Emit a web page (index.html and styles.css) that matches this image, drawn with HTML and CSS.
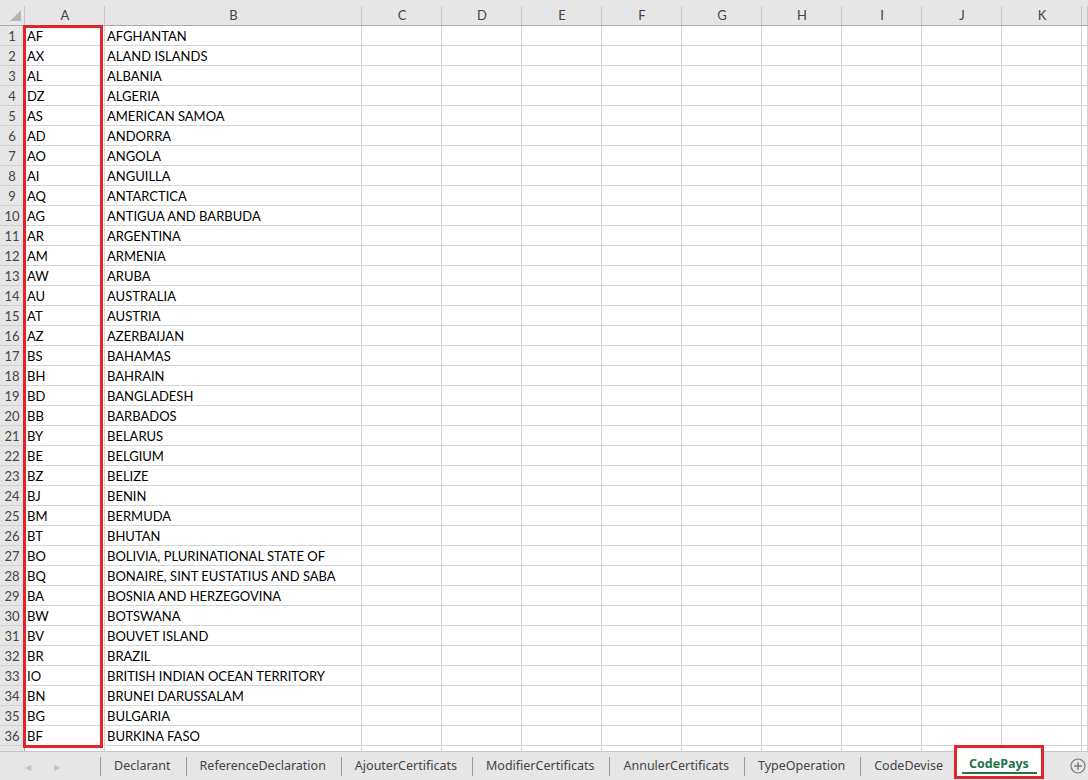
FILE: index.html
```html
<!DOCTYPE html>
<html lang="fr">
  <head>
    <meta charset="UTF-8" />
    <meta name="viewport" content="width=device-width, initial-scale=1.0" />
    <title>CodePays</title>
    <link rel="stylesheet" href="styles.css">
  </head>
  <body>
    <div class="book">
      <div class="sheet-wrap">
        <div class="sheet"></div>
        <div class="mark-col"></div>
      </div>

      <div class="tabbar">
        <div class="nav">
          <span class="arrow">&#9664;</span>
          <span class="arrow">&#9654;</span>
        </div>
        <div class="tabs">
          <span class="tab">Declarant</span>
          <span class="tab">ReferenceDeclaration</span>
          <span class="tab">AjouterCertificats</span>
          <span class="tab">ModifierCertificats</span>
          <span class="tab">AnnulerCertificats</span>
          <span class="tab">TypeOperation</span>
          <span class="tab">CodeDevise</span>
          <span class="tab active">CodePays</span>
        </div>
        <div class="add">
          <svg width="16" height="16" viewBox="0 0 16 16">
            <circle cx="8" cy="8" r="7" fill="none" stroke="#7a7a7a" stroke-width="1.2" />
            <path d="M8 4.2v7.6M4.2 8h7.6" stroke="#7a7a7a" stroke-width="1.4" />
          </svg>
        </div>
      </div>
    </div>

    <script>
      let sheet = document.querySelector(".sheet");

      let pays = [
        ["AF", "AFGHANTAN"],
        ["AX", "ALAND ISLANDS"],
        ["AL", "ALBANIA"],
        ["DZ", "ALGERIA"],
        ["AS", "AMERICAN SAMOA"],
        ["AD", "ANDORRA"],
        ["AO", "ANGOLA"],
        ["AI", "ANGUILLA"],
        ["AQ", "ANTARCTICA"],
        ["AG", "ANTIGUA AND BARBUDA"],
        ["AR", "ARGENTINA"],
        ["AM", "ARMENIA"],
        ["AW", "ARUBA"],
        ["AU", "AUSTRALIA"],
        ["AT", "AUSTRIA"],
        ["AZ", "AZERBAIJAN"],
        ["BS", "BAHAMAS"],
        ["BH", "BAHRAIN"],
        ["BD", "BANGLADESH"],
        ["BB", "BARBADOS"],
        ["BY", "BELARUS"],
        ["BE", "BELGIUM"],
        ["BZ", "BELIZE"],
        ["BJ", "BENIN"],
        ["BM", "BERMUDA"],
        ["BT", "BHUTAN"],
        ["BO", "BOLIVIA, PLURINATIONAL STATE OF"],
        ["BQ", "BONAIRE, SINT EUSTATIUS AND SABA"],
        ["BA", "BOSNIA AND HERZEGOVINA"],
        ["BW", "BOTSWANA"],
        ["BV", "BOUVET ISLAND"],
        ["BR", "BRAZIL"],
        ["IO", "BRITISH INDIAN OCEAN TERRITORY"],
        ["BN", "BRUNEI DARUSSALAM"],
        ["BG", "BULGARIA"],
        ["BF", "BURKINA FASO"]
      ];

      let cols = ["A", "B", "C", "D", "E", "F", "G", "H", "I", "J", "K", ""];

      // ---- header row
      let html = '<div class="corner"><span class="tri"></span></div>';
      for (let i = 0; i < cols.length; i++) {
        html += '<div class="colhead">' + cols[i] + "</div>";
      }

      // ---- data rows (+ one partial row)
      for (let r = 0; r <= pays.length; r++) {
        let row = pays[r] || ["", ""];
        html += '<div class="rowhead">' + (pays[r] ? r + 1 : "") + "</div>";
        for (let c = 0; c < cols.length; c++) {
          let txt = c < 2 ? row[c] : "";
          html += '<div class="cell">' + txt + "</div>";
        }
      }

      sheet.innerHTML = html;
    </script>
  </body>
</html>
```

FILE: styles.css
```css
* {
  padding: 0;
  margin: 0;
  box-sizing: border-box;
}
body {
  background: #fff;
  width: 1088px;
  height: 780px;
  overflow: hidden;
}
.book {
  display: flex;
  flex-direction: column;
  height: 780px;
}
.sheet-wrap {
  position: relative;
  height: 751px;
  overflow: hidden;
}
.sheet {
  display: grid;
  grid-template-columns: 25px 80px 257px repeat(9, 80px) 1fr;
  grid-template-rows: 26px;
  grid-auto-rows: 20px;
  font-family: "Lato", "Liberation Sans", sans-serif;
  font-size: 13px;
  color: #000;
}
.corner,
.colhead {
  background: #e6e6e6;
  border-bottom: 1px solid #ababab;
  position: relative;
}
.colhead {
  display: flex;
  align-items: center;
  justify-content: center;
  padding-top: 4px;
  color: #444;
  font-size: 13px;
}
.colhead::after,
.corner::after {
  content: "";
  position: absolute;
  right: 0;
  top: 6px;
  bottom: 0;
  width: 1px;
  background: #c6c6c6;
}
.corner .tri {
  position: absolute;
  right: 4px;
  bottom: 4px;
  width: 0;
  height: 0;
  border-left: 11px solid transparent;
  border-bottom: 11px solid #b4b4b4;
}
.rowhead {
  background: #e6e6e6;
  border-right: 1px solid #ababab;
  border-bottom: 1px solid #d0d0d0;
  color: #444;
  display: flex;
  align-items: center;
  justify-content: center;
  padding-top: 1px;
  font-size: 13px;
}
.cell {
  border-right: 1px solid #d4d4d4;
  border-bottom: 1px solid #d4d4d4;
  padding: 2px 2px 0;
  line-height: 17px;
  white-space: nowrap;
  overflow: visible;
}
.mark-col {
  position: absolute;
  left: 23px;
  top: 25px;
  width: 80px;
  height: 723px;
  border: 3px solid #e3242b;
}

/* ---- sheet tabs */
.tabbar {
  flex: 1;
  display: flex;
  align-items: stretch;
  background: #e6e6e6;
  border-top: 1px solid #c6c6c6;
  font-family: "Noto Sans", "Open Sans", sans-serif;
  font-size: 12.5px;
  color: #444;
  position: relative;
}
.nav {
  width: 100px;
  display: flex;
  align-items: center;
  padding-left: 25px;
  gap: 23px;
}
.nav .arrow {
  color: #c4c4c4;
  font-size: 8px;
}
.tabs {
  display: flex;
  align-items: stretch;
}
.tab {
  display: flex;
  align-items: center;
  padding: 0 15px 2px 14px;
  position: relative;
}
.tab::before {
  content: "";
  position: absolute;
  left: 0;
  top: 5px;
  height: 19px;
  width: 1px;
  background: #9a9a9a;
}
.tab.active {
  background: #fff;
  color: #217346;
  font-weight: 700;
  margin: -4px 0 4px -1px;
  padding: 3px 12px 0 12px;
  box-shadow: 1px 0 2px #0004;
  outline: 3px solid #e3242b;
  z-index: 2;
}
.tab.active::before {
  display: none;
}
.tab.active::after {
  content: "";
  position: absolute;
  left: 5px;
  right: 4px;
  bottom: 2px;
  height: 2px;
  background: #217346;
}
.add {
  margin-left: auto;
  width: 18px;
  display: flex;
  align-items: center;
}
```
